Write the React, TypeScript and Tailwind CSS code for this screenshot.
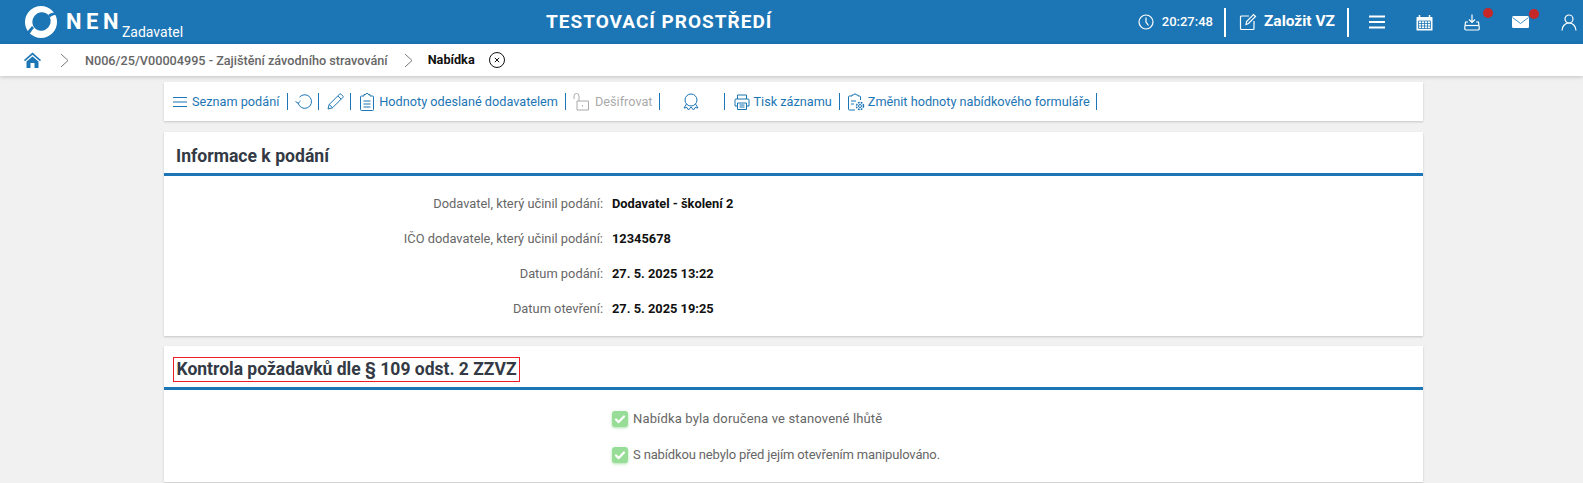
const Divider = ({ className }: { className: string }) => (
  <span className={`h-[17px] w-[1px] shrink-0 bg-[#1c75b4] ${className}`} />
);

const Chevron = ({ className }: { className: string }) => (
  <svg className={className} width="9" height="15" viewBox="0 0 9 15" fill="none" stroke="#777777" strokeWidth="1">
    <path d="M1 1l7 6.500-7 6.500" />
  </svg>
);

const Logo = () => (
  <svg width="32" height="32" viewBox="0 0 32 32" className="shrink-0">
    <circle cx="16" cy="16" r="16" fill="#fff" />
    <ellipse cx="16.500" cy="15.500" rx="9" ry="9.500" transform="rotate(40 16.500 15.500)" fill="#1c75b4" />
    <path d="M23 9c3-2 6-3 10-2.500v2.500c-3-.5-6 .5-8 2.500z" fill="#1c75b4" />
    <path d="M9 22c-2 2.500-4 5-5 7l-3-1.500c2-3 4-5.500 6-7.500z" fill="#1c75b4" />
  </svg>
);

const rows = [
  ["Dodavatel, který učinil podání:", "Dodavatel - školení 2"],
  ["IČO dodavatele, který učinil podání:", "12345678"],
  ["Datum podání:", "27. 5. 2025 13:22"],
  ["Datum otevření:", "27. 5. 2025 19:25"],
];

const Check = () => (
  <span className="mr-[5px] flex h-[16px] w-[16px] items-center justify-center rounded-[3px] bg-[#97dd97] shadow-[0_1px_3px_rgba(100,200,100,0.5)]">
    <svg width="12" height="12" viewBox="0 0 12 12" fill="none" stroke="#fff" strokeWidth="2.2" strokeLinecap="round" strokeLinejoin="round">
      <path d="M2 6.500l2.700 2.600L10 3.500" />
    </svg>
  </span>
);

export default function App() {
  return (
    <div className="h-[483px] w-[1583px] overflow-hidden bg-[#f1f1f1] font-['Roboto',sans-serif]">
      <header className="flex h-[44px] items-center bg-[#1c75b4] text-white">
        <div className="flex w-[400px] items-center pl-[25px]">
          <Logo />
          <span className="ml-[9px] text-[22px] font-bold leading-none tracking-[4.500px]">NEN</span>
          <span className="ml-[-1px] mt-[19px] text-[14px] leading-none">Zadavatel</span>
        </div>
        <div className="flex-1 pl-[146px] text-[19px] font-bold tracking-[1px]">TESTOVACÍ PROSTŘEDÍ</div>
        <div className="flex items-center pr-[6px]">
          <svg width="16" height="16" viewBox="0 0 16 16" fill="none" stroke="#fff" strokeWidth="1.200">
            <circle cx="8" cy="8" r="7" />
            <path d="M8 3.500V8l2.500 3.500" />
          </svg>
          <span className="ml-[8px] text-[13px] font-medium">20:27:48</span>
          <span className="ml-[11px] h-[29px] w-[2px] bg-white" />
          <svg className="ml-[13px]" width="18" height="18" viewBox="0 0 18 18" fill="none" stroke="#fff" strokeWidth="1.200">
            <path d="M10 3H2.500A1 1 0 0 0 1.500 4v11.500a1 1 0 0 0 1 1H14a1 1 0 0 0 1-1V8" />
            <path d="M7 11.500l.6-3L14.500 1.500l2 2-7 7z" />
          </svg>
          <span className="ml-[7px] text-[15.500px] font-bold">Založit VZ</span>
          <span className="ml-[12px] h-[29px] w-[2px] bg-white" />
          <svg className="ml-[20px]" width="16" height="14" viewBox="0 0 16 14" stroke="#fff" strokeWidth="2">
            <path d="M0 1.500h16M0 7h16M0 12.500h16" />
          </svg>
          <svg className="ml-[31px]" width="17" height="17" viewBox="0 0 17 17">
            <path d="M1 3h15a.5.5 0 0 1 .5.5V16a.5.5 0 0 1-.5.5H1a.5.5 0 0 1-.5-.5V3.500A.5.5 0 0 1 1 3z" fill="#fff" />
            <path d="M3.500 1v3M13.500 1v3" stroke="#fff" strokeWidth="1.500" />
            <path d="M2.500 7h12v7.500h-12zM2.500 9.500h12M2.500 12h12M5.500 7v7.500M8.500 7v7.500M11.500 7v7.500" fill="none" stroke="#1c75b4" strokeWidth="0.800" />
          </svg>
          <span className="relative ml-[31px] block">
            <svg className="block" width="16" height="17" viewBox="0 0 16 17" fill="none" stroke="#fff" strokeWidth="1.200">
              <path d="M8 0.500v8M5 5.500l3 3 3-3" />
              <path d="M4 8H1.500L0.700 14.500a1.500 1.500 0 0 0 1.500 1.500h11.600a1.500 1.500 0 0 0 1.500-1.500L14.500 8H12" />
              <path d="M1 11.500h14" />
            </svg>
            <span className="absolute right-[-13px] top-[-6px] h-[10px] w-[10px] rounded-full bg-[#c62828]" />
          </span>
          <span className="relative ml-[32px] block">
            <svg className="block" width="17" height="12" viewBox="0 0 17 12">
              <rect width="17" height="12" rx="1.500" fill="#fff" />
              <path d="M0.500 1.500L8.500 7.500l8-6" fill="none" stroke="#1c75b4" strokeWidth="0.800" />
            </svg>
            <span className="absolute right-[-10px] top-[-7px] h-[10px] w-[10px] rounded-full bg-[#c62828]" />
          </span>
          <svg className="ml-[32px]" width="16" height="17" viewBox="0 0 16 17" fill="none" stroke="#fff" strokeWidth="1.200">
            <circle cx="8" cy="5" r="4" />
            <path d="M1 16.500c0-4 3-7.500 7-7.500s7 3.500 7 7.500" />
          </svg>
        </div>
      </header>

      <nav className="flex h-[32px] items-center bg-white pl-[24px] shadow-[0_1px_4px_rgba(0,0,0,0.2)]">
        <svg width="17" height="16" viewBox="0 0 17 16" fill="#1c75b4">
          <path d="M8.500 0.500L0 8l1 1.200 7.500-6.400L16 9.200 17 8z" />
          <path d="M2.500 9.500l6-5 6 5V16h-4v-5h-4v5h-4z" />
        </svg>
        <Chevron className="ml-[19px]" />
        <span className="ml-[16px] text-[12.670px] font-medium text-[#666666]">N006/25/V00004995 - Zajištění závodního stravování</span>
        <Chevron className="ml-[16px]" />
        <span className="ml-[15px] text-[12.700px] font-bold text-[#111111]">Nabídka</span>
        <svg className="ml-[14px]" width="16" height="16" viewBox="0 0 16 16" fill="none" stroke="#111111">
          <circle cx="8" cy="8" r="7.500" />
          <path d="M5.800 5.800l4.400 4.400M10.200 5.800l-4.400 4.400" />
        </svg>
      </nav>

      <main className="ml-[164px] mt-[6px] w-[1259px]">
        <div className="flex h-[39px] items-center bg-white pl-[9px] text-[12.700px] text-[#1c75b4] shadow-[0_1px_2px_rgba(0,0,0,0.18)]">
          <svg className="shrink-0" width="14" height="10" viewBox="0 0 14 10" stroke="#1c75b4">
            <path d="M0 0.500h14M0 5h14M0 9.500h14" />
          </svg>
          <span className="ml-[5px]">Seznam podání</span>
          <Divider className="ml-[8px]" />
          <svg className="ml-[7px] shrink-0" width="17" height="16" viewBox="0 0 17 16" fill="none" stroke="#1c75b4" strokeWidth="1">
            <path d="M4.500 3.200A6.800 6.800 0 1 1 3 8.500M0.500 7.500l2.700 1.800 2.300-2.300" />
          </svg>
          <Divider className="ml-[6px]" />
          <svg className="ml-[8px] shrink-0" width="17" height="17" viewBox="0 0 17 17" fill="none" stroke="#1c75b4" strokeWidth="1">
            <path d="M1 16l1.200-4.500L12.500 1.200a1 1 0 0 1 1.500 0l1.800 1.800a1 1 0 0 1 0 1.500L5.500 14.800zM2.200 11.500l3.300 3.300M11 3l3 3" />
          </svg>
          <Divider className="ml-[6px]" />
          <svg className="ml-[9px] shrink-0" width="14" height="18" viewBox="0 0 14 18" fill="none" stroke="#1c75b4" strokeWidth="1">
            <path d="M4 3H1.500a1 1 0 0 0-1 1v12.500a1 1 0 0 0 1 1h11a1 1 0 0 0 1-1V4a1 1 0 0 0-1-1H10V1.500H8.500a1.500 1 0 0 0-3 0H4zM3.500 8h7M3.500 11h7M3.500 14h7" />
          </svg>
          <span className="ml-[5px]">Hodnoty odeslané dodavatelem</span>
          <Divider className="ml-[7px]" />
          <svg className="ml-[7px] shrink-0" width="16" height="18" viewBox="0 0 16 18" fill="none" stroke="#aaaaaa" strokeWidth="1">
            <path d="M1 6V3a2.500 2.500 0 0 1 5 0v5M4 8h11.500v9H4zM9.500 12v1.500" />
          </svg>
          <span className="ml-[6px] text-[#aaaaaa]">Dešifrovat</span>
          <Divider className="ml-[6px]" />
          <svg className="ml-[23px] shrink-0" width="16" height="18" viewBox="0 0 16 18" fill="none" stroke="#1c75b4" strokeWidth="1">
            <circle cx="8" cy="7" r="6" />
            <path d="M3.500 11L1 15l3-.5L5.500 17 8 14l2.500 3 1.500-2.500 3 .5-2.500-4" />
          </svg>
          <Divider className="ml-[25px]" />
          <svg className="ml-[9px] shrink-0" width="16" height="16" viewBox="0 0 16 16" fill="none" stroke="#1c75b4" strokeWidth="1">
            <path d="M3.500 5V1h9v4M3.500 12H1V6a1 1 0 0 1 1-1h12a1 1 0 0 1 1 1v6h-2.500M3.500 9h9v6.500h-9zM5.500 11h5M5.500 13h5" />
          </svg>
          <span className="ml-[4px]">Tisk záznamu</span>
          <Divider className="ml-[7px]" />
          <svg className="ml-[8px] shrink-0" width="17" height="18" viewBox="0 0 17 18" fill="none" stroke="#1c75b4" strokeWidth="1">
            <path d="M7 17H1.500a1 1 0 0 1-1-1V4a1 1 0 0 1 1-1H4V2h1.500a1.500 1 0 0 1 3 0H10v1h1.500a1 1 0 0 1 1 1v3M3 8h5M3 11h3" />
            <circle cx="12" cy="13" r="1.500" />
            <circle cx="12" cy="13" r="3.500" strokeDasharray="1.800 1" strokeWidth="1.500" />
          </svg>
          <span className="ml-[3px]">Změnit hodnoty nabídkového formuláře</span>
          <Divider className="ml-[6px]" />
        </div>

        <section className="mt-[11px] h-[204px] bg-white shadow-[0_1px_2px_rgba(0,0,0,0.18)]">
          <div className="flex h-[41px] items-end pb-[5px] pl-[12px]">
            <h2 className="text-[17.600px] font-bold leading-[24px] text-[#333a45]">Informace k podání</h2>
          </div>
          <div className="h-[3px] bg-[#1c75b4]" />
          <div className="pt-[10px]">
            {rows.map(([label, value]) => (
              <div key={label} className="flex h-[35px] items-center">
                <span className="w-[439px] text-right text-[12.850px] text-[#666666]">{label}</span>
                <span className="ml-[9px] text-[12.850px] font-bold text-[#111111]">{value}</span>
              </div>
            ))}
          </div>
        </section>

        <section className="mt-[10px] h-[136px] bg-white shadow-[0_1px_2px_rgba(0,0,0,0.18)]">
          <div className="flex h-[41px] items-end pb-[5px] pl-[9px]">
            <h2 className="border border-[#ee1c25] px-[2.500px] text-[17.500px] font-bold leading-[23px] text-[#333a45]">
              Kontrola požadavků dle § 109 odst. 2 ZZVZ
            </h2>
          </div>
          <div className="h-[3px] bg-[#1c75b4]" />
          <div className="pl-[448px] pt-[11px]">
            <div className="flex h-[36px] items-center">
              <Check />
              <span className="text-[13px] tracking-[0.150px] text-[#666666]">Nabídka byla doručena ve stanovené lhůtě</span>
            </div>
            <div className="flex h-[36px] items-center">
              <Check />
              <span className="text-[13px] tracking-[-0.150px] text-[#666666]">S nabídkou nebylo před jejím otevřením manipulováno.</span>
            </div>
          </div>
        </section>
      </main>
    </div>
  );
}
